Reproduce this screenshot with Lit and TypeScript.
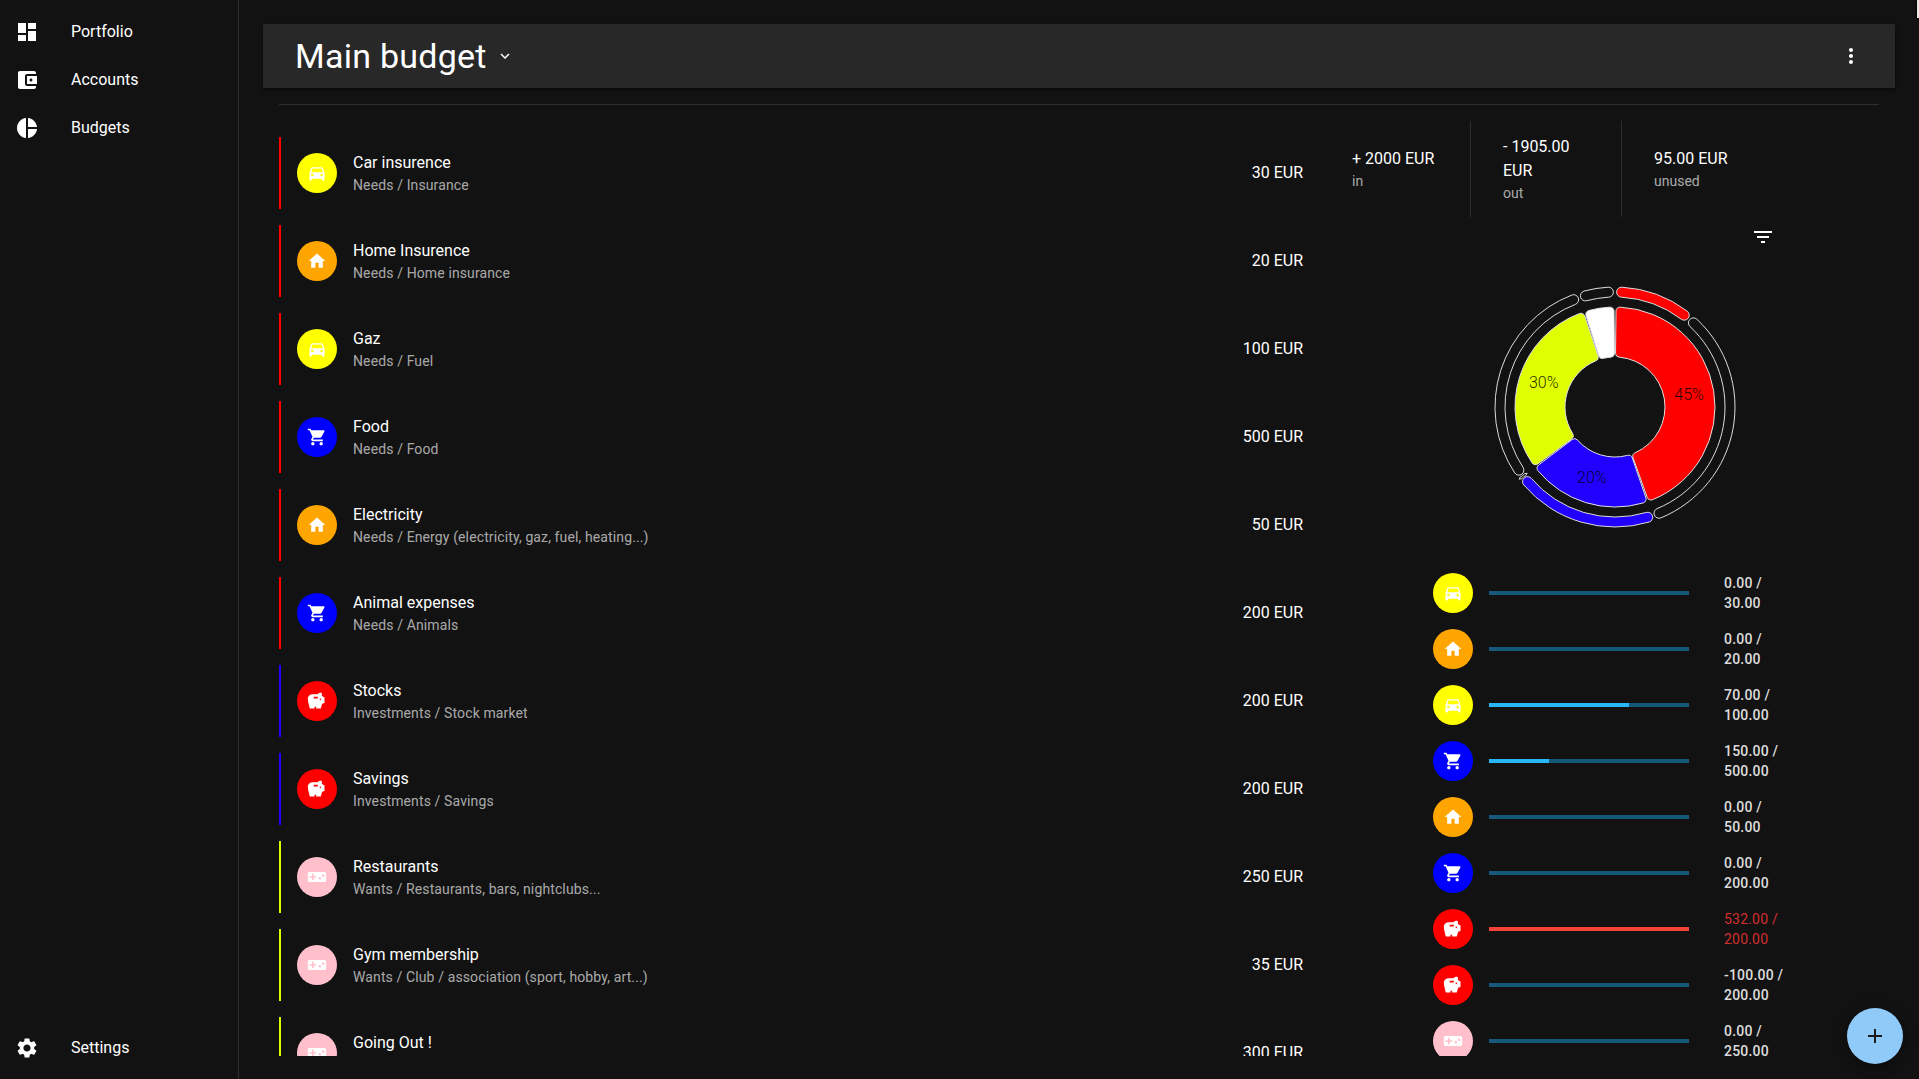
import { LitElement, html, css, svg } from "lit";
import { customElement } from "lit/decorators.js";

const P = {
  dashboard: "M3 13h8V3H3v10zm0 8h8v-6H3v6zm10 0h8V11h-8v10zm0-18v6h8V3h-8z",
  wallet: "M21 18v1c0 1.1-.9 2-2 2H5c-1.11 0-2-.9-2-2V5c0-1.1.89-2 2-2h14c1.1 0 2 .9 2 2v1h-9c-1.11 0-2 .9-2 2v8c0 1.1.89 2 2 2h9zm-9-2h10V8H12v8zm4-2.5c-.83 0-1.5-.67-1.5-1.5s.67-1.5 1.5-1.5 1.5.67 1.5 1.5-.67 1.5-1.5 1.5z",
  pie: "M11 2v20c-5.07-.5-9-4.79-9-10s3.93-9.5 9-10zm2.03 0v8.99H22c-.47-4.74-4.24-8.52-8.97-8.99zm0 11.01V22c4.74-.47 8.5-4.25 8.97-8.99h-8.97z",
  settings: "M19.14 12.94c.04-.3.06-.61.06-.94 0-.32-.02-.64-.07-.94l2.03-1.58c.18-.14.23-.41.12-.61l-1.92-3.32c-.12-.22-.37-.29-.59-.22l-2.39.96c-.5-.38-1.03-.7-1.62-.94l-.36-2.54c-.04-.24-.24-.41-.48-.41h-3.84c-.24 0-.43.17-.47.41l-.36 2.54c-.59.24-1.13.57-1.62.94l-2.39-.96c-.22-.08-.47 0-.59.22L2.74 8.87c-.12.21-.08.47.12.61l2.03 1.58c-.05.3-.09.63-.09.94s.02.64.07.94l-2.03 1.58c-.18.14-.23.41-.12.61l1.92 3.32c.12.22.37.29.59.22l2.39-.96c.5.38 1.03.7 1.62.94l.36 2.54c.05.24.24.41.48.41h3.84c.24 0 .44-.17.47-.41l.36-2.54c.59-.24 1.13-.56 1.62-.94l2.39.96c.22.08.47 0 .59-.22l1.92-3.32c.12-.22.07-.47-.12-.61l-2.01-1.58zM12 15.6c-1.98 0-3.6-1.62-3.6-3.6s1.62-3.6 3.6-3.6 3.6 1.62 3.6 3.6-1.62 3.6-3.6 3.6z",
  car: "M18.92 6.01C18.72 5.42 18.16 5 17.5 5h-11c-.66 0-1.21.42-1.42 1.01L3 12v8c0 .55.45 1 1 1h1c.55 0 1-.45 1-1v-1h12v1c0 .55.45 1 1 1h1c.55 0 1-.45 1-1v-8l-2.08-5.99zM6.5 16c-.83 0-1.5-.67-1.5-1.5S5.67 13 6.5 13s1.5.67 1.5 1.5S7.33 16 6.5 16zm11 0c-.83 0-1.5-.67-1.5-1.5s.67-1.5 1.5-1.5 1.5.67 1.5 1.5-.67 1.5-1.5 1.5zM5 11l1.5-4.5h11L19 11H5z",
  home: "M10 20v-6h4v6h5v-8h3L12 3 2 12h3v8z",
  cart: "M7 18c-1.1 0-1.99.9-1.99 2S5.9 22 7 22s2-.9 2-2-.9-2-2-2zM1 2v2h2l3.6 7.59-1.35 2.45c-.16.28-.25.61-.25.96 0 1.1.9 2 2 2h12v-2H7.42c-.14 0-.25-.11-.25-.25l.03-.12.9-1.63h7.45c.75 0 1.41-.41 1.75-1.03l3.58-6.49c.08-.14.12-.31.12-.48 0-.55-.45-1-1-1H5.21l-.94-2H1zm16 16c-1.1 0-1.99.9-1.99 2s.89 2 1.99 2 2-.9 2-2-.9-2-2-2z",
  pig: "M19.83 7.5l-2.27-2.27c.07-.42.18-.81.32-1.15.08-.18.12-.37.12-.58 0-.83-.67-1.5-1.5-1.5-1.64 0-3.09.79-4 2h-5C3.46 4 1 6.46 1 9.5S3.5 21 3.5 21H9v-2h2v2h5.5l1.68-5.59 2.82-.94V7.5h-1.17zM13 9H8V7h5v2zm3 2c-.55 0-1-.45-1-1s.45-1 1-1 1 .45 1 1-.45 1-1 1z",
  game: "M21 6H3c-1.1 0-2 .9-2 2v8c0 1.1.9 2 2 2h18c1.1 0 2-.9 2-2V8c0-1.1-.9-2-2-2zm-10 7H8v3H6v-3H3v-2h3V8h2v3h3v2zm4.5 2c-.83 0-1.5-.67-1.5-1.5s.67-1.5 1.5-1.5 1.5.67 1.5 1.5-.67 1.5-1.5 1.5zm4-3c-.83 0-1.5-.67-1.5-1.5S18.67 9 19.5 9s1.5.67 1.5 1.5-.67 1.5-1.5 1.5z",
  filter: "M10 18h4v-2h-4v2zM3 6v2h18V6H3zm3 7h12v-2H6v2z",
  more: "M12 8c1.1 0 2-.9 2-2s-.9-2-2-2-2 .9-2 2 .9 2 2 2zm0 2c-1.1 0-2 .9-2 2s.9 2 2 2 2-.9 2-2-.9-2-2-2zm0 6c-1.1 0-2 .9-2 2s.9 2 2 2 2-.9 2-2-.9-2-2-2z",
  expand: "M16.59 8.59L12 13.17 7.41 8.59 6 10l6 6 6-6z",
  plus: "M19 13h-6v6h-2v-6H5v-2h6V5h2v6h6v2z",
};

type Kind = "car" | "home" | "cart" | "pig" | "game";
const KIND: Record<Kind, string> = { car: "#ffff00", home: "#ffa500", cart: "#0000ff", pig: "#ff0000", game: "#ffc0cb" };
const GROUP = { needs: "#ff0000", inv: "#2200ff", wants: "#dfff00" };

const rows: { t: string; s: string; a: string; k: Kind; g: keyof typeof GROUP }[] = [
  { t: "Car insurence", s: "Needs / Insurance", a: "30 EUR", k: "car", g: "needs" },
  { t: "Home Insurence", s: "Needs / Home insurance", a: "20 EUR", k: "home", g: "needs" },
  { t: "Gaz", s: "Needs / Fuel", a: "100 EUR", k: "car", g: "needs" },
  { t: "Food", s: "Needs / Food", a: "500 EUR", k: "cart", g: "needs" },
  { t: "Electricity", s: "Needs / Energy (electricity, gaz, fuel, heating...)", a: "50 EUR", k: "home", g: "needs" },
  { t: "Animal expenses", s: "Needs / Animals", a: "200 EUR", k: "cart", g: "needs" },
  { t: "Stocks", s: "Investments / Stock market", a: "200 EUR", k: "pig", g: "inv" },
  { t: "Savings", s: "Investments / Savings", a: "200 EUR", k: "pig", g: "inv" },
  { t: "Restaurants", s: "Wants / Restaurants, bars, nightclubs...", a: "250 EUR", k: "game", g: "wants" },
  { t: "Gym membership", s: "Wants / Club / association (sport, hobby, art...)", a: "35 EUR", k: "game", g: "wants" },
  { t: "Going Out !", s: "\u00a0", a: "300 EUR", k: "game", g: "wants" },
];

const progress: { k: Kind; a: string; b: string; pct: number; over?: boolean }[] = [
  { k: "car", a: "0.00", b: "30.00", pct: 0 },
  { k: "home", a: "0.00", b: "20.00", pct: 0 },
  { k: "car", a: "70.00", b: "100.00", pct: 70 },
  { k: "cart", a: "150.00", b: "500.00", pct: 30 },
  { k: "home", a: "0.00", b: "50.00", pct: 0 },
  { k: "cart", a: "0.00", b: "200.00", pct: 0 },
  { k: "pig", a: "532.00", b: "200.00", pct: 100, over: true },
  { k: "pig", a: "-100.00", b: "200.00", pct: 0 },
  { k: "game", a: "0.00", b: "250.00", pct: 0 },
];

/* Annular sector with rounded corners; angles are degrees clockwise from 12 o'clock. */
function sector(R: number, r: number, a0: number, a1: number, c: number) {
  const pt = (rad: number, deg: number) => {
    const t = (deg * Math.PI) / 180;
    return `${(rad * Math.sin(t)).toFixed(2)} ${(-rad * Math.cos(t)).toFixed(2)}`;
  };
  const span = a1 - a0;
  const cc = Math.min(c, (R - r) / 2);
  const dO = Math.min((Math.asin(cc / (R - cc)) * 180) / Math.PI, span / 2);
  const dI = Math.min((Math.asin(cc / (r + cc)) * 180) / Math.PI, span / 2);
  const eO = Math.sqrt((R - cc) ** 2 - cc ** 2);
  const eI = Math.sqrt((r + cc) ** 2 - cc ** 2);
  const lO = span - 2 * dO > 180 ? 1 : 0;
  const lI = span - 2 * dI > 180 ? 1 : 0;
  return [
    `M${pt(R, a0 + dO)}`,
    `A${R} ${R} 0 ${lO} 1 ${pt(R, a1 - dO)}`,
    `A${cc} ${cc} 0 0 1 ${pt(eO, a1)}`,
    `L${pt(eI, a1)}`,
    `A${cc} ${cc} 0 0 1 ${pt(r, a1 - dI)}`,
    `A${r} ${r} 0 ${lI} 0 ${pt(r, a0 + dI)}`,
    `A${cc} ${cc} 0 0 1 ${pt(eI, a0)}`,
    `L${pt(eO, a0)}`,
    `A${cc} ${cc} 0 0 1 ${pt(R, a0 + dO)}Z`,
  ].join("");
}

const inner = [
  { a: 0.6, b: 160.4, c: "#ff0000" },
  { a: 161.2, b: 232.8, c: "#2200ff" },
  { a: 233.6, b: 341.6, c: "#dfff00" },
  { a: 342.4, b: 359.4, c: "#ffffff" },
];
const outer = [
  { a: 0.8, b: 39.5, c: "#ff0000" },
  { a: 40.5, b: 160, c: "none" },
  { a: 161, b: 232, c: "#2200ff" },
  { a: 232.6, b: 233.4, c: "none" },
  { a: 234.2, b: 341.4, c: "none" },
  { a: 342.6, b: 359.2, c: "none" },
];
const labels = [
  { t: "45%", d: 81 },
  { t: "20%", d: 198 },
  { t: "30%", d: 288 },
];

function icon(d: string) {
  return svg`<svg viewBox="0 0 24 24" fill="currentColor"><path d=${d}></path></svg>`;
}

@customElement("app-root")
export class AppRoot extends LitElement {
  static styles = css`
    :host { display: block; height: 100vh; background: #121212; color: #fff; font-family: Roboto, "Liberation Sans", sans-serif; overflow: hidden; }
    .shell { display: flex; height: 100%; position: relative; }
    .side { width: 238px; flex: none; border-right: 1px solid #2e2e2e; display: flex; flex-direction: column; padding: 7px 0 8px; }
    .side .spacer { flex: 1; }
    .nav { height: 48px; display: flex; align-items: center; padding-left: 15px; font-size: 16px; }
    .nav svg { width: 24px; height: 24px; margin: 2px 32px 0 0; flex: none; }
    .main { flex: 1; min-width: 0; display: flex; flex-direction: column; padding: 24px 24px 23px; }
    .head { height: 64px; flex: none; background: #282828; display: flex; align-items: center; padding: 0 32px; box-shadow: 0 2px 4px rgba(0,0,0,.45); }
    .head h1 { margin: 0; font-size: 34px; font-weight: 400; line-height: 40px; letter-spacing: .25px; }
    .head .chev { width: 18px; height: 18px; margin-left: 9px; }
    .head .grow { flex: 1; }
    .head .dots { width: 24px; height: 24px; }
    .body { flex: 1; min-height: 0; margin: 16px 16px 0; border-top: 1px solid #2e2e2e; display: flex; overflow: hidden; }
    .list { flex: 1; min-width: 0; padding-top: 32px; display: flex; flex-direction: column; gap: 16px; overflow: hidden; }
    .row { flex: none; height: 72px; border-left: 2px solid; padding: 0 16px; display: flex; align-items: center; }
    .dot { width: 40px; height: 40px; border-radius: 50%; display: flex; align-items: center; justify-content: center; color: #fff; flex: none; }
    .dot svg { width: 20px; height: 20px; }
    .txt { flex: 1; margin-left: 16px; min-width: 0; }
    .ti { font-size: 16px; line-height: 24px; }
    .su { font-size: 14px; line-height: 20px; letter-spacing: .12px; color: rgba(255,255,255,.65); }
    .am { font-size: 16px; line-height: 24px; }
    .right { width: 560px; flex: none; overflow: hidden; display: flex; flex-direction: column; padding-top: 16px; }
    .stats { display: flex; height: 96px; flex: none; margin-left: 1px; }
    .stat { width: 151px; box-sizing: border-box; padding: 0 32px; display: flex; flex-direction: column; justify-content: center; border-right: 1px solid #2e2e2e; }
    .stat:last-child { border-right: none; }
    .stat .v { font-size: 16px; line-height: 24px; }
    .stat .l { font-size: 14px; line-height: 20px; color: rgba(255,255,255,.65); }
    .filter { flex: none; height: 24px; margin-top: 8px; padding-left: 432px; }
    .filter svg { width: 24px; height: 24px; display: block; }
    .chart { flex: none; display: flex; justify-content: center; margin: 28px 0 0 32px; }
    .chart svg { width: 260px; height: 260px; display: block; overflow: visible; }
    .chart text { font: 300 16px Roboto, sans-serif; text-anchor: middle; dominant-baseline: central; }
    .bars { flex: none; margin-top: 28px; padding-left: 114px; }
    .bar { height: 56px; display: flex; align-items: center; }
    .track { width: 200px; height: 4px; background: #155a7c; margin-left: 16px; flex: none; }
    .fill { height: 100%; background: #29b6f6; }
    .fill.over { background: #f44336; }
    .amt { margin-left: 35px; width: 70px; font-size: 14px; line-height: 20px; font-weight: 500; color: rgba(255,255,255,.87); letter-spacing: .2px; }
    .amt.over { color: #d32f2f; font-weight: 400; }
    .fab { position: absolute; right: 16px; bottom: 15px; width: 56px; height: 56px; border-radius: 50%; background: #90caf9; color: #1a1a1a; display: flex; align-items: center; justify-content: center; box-shadow: 0 3px 5px -1px rgba(0,0,0,.2), 0 6px 10px 0 rgba(0,0,0,.14), 0 1px 18px 0 rgba(0,0,0,.12); }
    .fab svg { width: 24px; height: 24px; }
    .corner { position: absolute; right: 0; top: 0; width: 2px; height: 18px; background: #e8e8e8; box-shadow: -1px 1px 2px rgba(0,0,0,.8); }
  `;

  render() {
    return html`<div class="shell">
      <nav class="side">
        <div class="nav">${icon(P.dashboard)}Portfolio</div>
        <div class="nav">${icon(P.wallet)}Accounts</div>
        <div class="nav">${icon(P.pie)}Budgets</div>
        <div class="spacer"></div>
        <div class="nav">${icon(P.settings)}Settings</div>
      </nav>
      <main class="main">
        <header class="head">
          <h1>Main budget</h1>
          <span class="chev">${icon(P.expand)}</span>
          <span class="grow"></span>
          <span class="dots">${icon(P.more)}</span>
        </header>
        <section class="body">
          <div class="list">
            ${rows.map(
              (r) => html`<div class="row" style="border-color:${GROUP[r.g]}">
                <span class="dot" style="background:${KIND[r.k]}">${icon(P[r.k])}</span>
                <div class="txt"><div class="ti">${r.t}</div><div class="su">${r.s}</div></div>
                <div class="am">${r.a}</div>
              </div>`
            )}
          </div>
          <aside class="right">
            <div class="stats">
              <div class="stat"><div class="v">+ 2000 EUR</div><div class="l">in</div></div>
              <div class="stat"><div class="v">- 1905.00 EUR</div><div class="l">out</div></div>
              <div class="stat"><div class="v">95.00 EUR</div><div class="l">unused</div></div>
            </div>
            <div class="filter">${icon(P.filter)}</div>
            <div class="chart">
              <svg viewBox="-130 -130 260 260">
                ${outer.map((s) => svg`<path d=${sector(120, 110, s.a, s.b, 5)} fill=${s.c} stroke="#dcdcdc" stroke-width="1"></path>`)}
                ${inner.map((s) => svg`<path d=${sector(100, 50, s.a, s.b, 4)} fill=${s.c} stroke="#e0e0e0" stroke-width="1"></path>`)}
                ${labels.map((l) => {
                  const t = (l.d * Math.PI) / 180;
                  return svg`<text x=${(75 * Math.sin(t)).toFixed(1)} y=${(-75 * Math.cos(t) - 1).toFixed(1)} fill="#000" fill-opacity="0.85">${l.t}</text>`;
                })}
              </svg>
            </div>
            <div class="bars">
              ${progress.map(
                (p) => html`<div class="bar">
                  <span class="dot" style="background:${KIND[p.k]}">${icon(P[p.k])}</span>
                  <div class="track"><div class="fill ${p.over ? "over" : ""}" style="width:${p.pct}%"></div></div>
                  <div class="amt ${p.over ? "over" : ""}">${p.a} / ${p.b}</div>
                </div>`
              )}
            </div>
          </aside>
        </section>
      </main>
      <div class="fab">${icon(P.plus)}</div>
      <div class="corner"></div>
    </div>`;
  }
}
